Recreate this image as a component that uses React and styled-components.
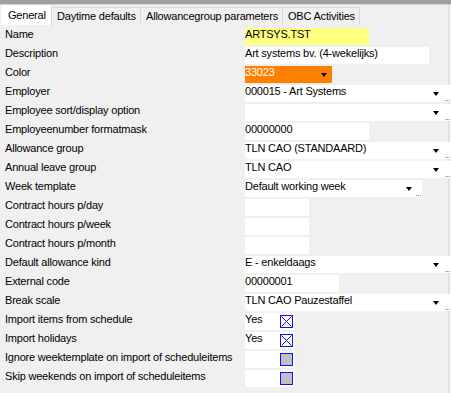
import React from 'react';
import styled, { createGlobalStyle } from 'styled-components';

const GlobalStyle = createGlobalStyle`
  html, body {
    margin: 0;
    padding: 0;
    background: #f0f0f0;
  }
  body {
    font-family: "Liberation Sans", Arial, sans-serif;
    font-size: 11px;
    letter-spacing: -0.2px;
    color: #000;
  }
`;

const tabs = [
  { title: 'General', width: 51 },
  { title: 'Daytime defaults', width: 90 },
  { title: 'Allowancegroup parameters', width: 143 },
  { title: 'OBC Activities', width: 78 }
];

const rows = [
  { label: 'Name', kind: 'text', value: 'ARTSYS.TST', width: 124, bg: '#ffff80' },
  { label: 'Description', kind: 'text', value: 'Art systems bv. (4-wekelijks)', width: 184 },
  { label: 'Color', kind: 'combo', value: '33023', width: 87, bg: '#ff8000', color: '#fff', arrow: 5 },
  { label: 'Employer', kind: 'combo', value: '000015 - Art Systems', width: 206, dots: true, arrow: 12 },
  { label: 'Employee sort/display option', kind: 'combo', value: '', width: 206, dots: true, arrow: 12 },
  { label: 'Employeenumber formatmask', kind: 'text', value: '00000000', width: 124 },
  { label: 'Allowance group', kind: 'combo', value: 'TLN CAO (STANDAARD)', width: 206, dots: true, arrow: 12 },
  { label: 'Annual leave group', kind: 'combo', value: 'TLN CAO', width: 206, dots: true, arrow: 12 },
  { label: 'Week template', kind: 'combo', value: 'Default working week', width: 177, dots: true, arrow: 10 },
  { label: 'Contract hours p/day', kind: 'text', value: '', width: 64 },
  { label: 'Contract hours p/week', kind: 'text', value: '', width: 64 },
  { label: 'Contract hours p/month', kind: 'text', value: '', width: 64 },
  { label: 'Default allowance kind', kind: 'combo', value: 'E - enkeldaags', width: 206, dots: true, arrow: 12 },
  { label: 'External code', kind: 'text', value: '00000001', width: 94 },
  { label: 'Break scale', kind: 'combo', value: 'TLN CAO Pauzestaffel', width: 206, dots: true, arrow: 12 },
  { label: 'Import items from schedule', kind: 'check', value: 'Yes', checked: true },
  { label: 'Import holidays', kind: 'check', value: 'Yes', checked: true },
  { label: 'Ignore weektemplate on import of scheduleitems', kind: 'check', value: '', checked: false },
  { label: 'Skip weekends on import of scheduleitems', kind: 'check', value: '', checked: false }
];

const Combo = ({ value, width, bg, color, dots, arrow }) => (
  <Field $width={width} $bg={bg} $color={color}>
    <FieldText>{value}</FieldText>
    <Arrow $right={arrow} />
    {dots && <Dots>...</Dots>}
  </Field>
);

const Check = ({ value, checked }) => (
  <CheckCell>
    <FieldText>{value}</FieldText>
    <Box $checked={checked}>
      {checked && (
        <svg width="11" height="11" viewBox="0 0 11 11">
          <path d="M0.5 0.5 L10.5 10.5 M10.5 0.5 L0.5 10.5" stroke="#1010ff" strokeWidth="1" fill="none" />
        </svg>
      )}
    </Box>
  </CheckCell>
);

const App = () => (
  <>
    <GlobalStyle />
    <Page>
      <TopBar />
      <TabStrip>
        {tabs.map((t, i) => (
          <Tab key={t.title} $active={i === 0} $width={t.width}>
            {t.title}
          </Tab>
        ))}
      </TabStrip>
      <Form>
        {rows.map(row => (
          <Row key={row.label}>
            <Label>{row.label}</Label>
            {row.kind === 'text' && (
              <Field $width={row.width} $bg={row.bg}>
                <FieldText>{row.value}</FieldText>
              </Field>
            )}
            {row.kind === 'combo' && <Combo {...row} />}
            {row.kind === 'check' && <Check {...row} />}
          </Row>
        ))}
      </Form>
    </Page>
  </>
);

const Page = styled.div`
  width: 451px;
  height: 393px;
  overflow: hidden;
  background: #f0f0f0;
`;

const TopBar = styled.div`
  height: 4px;
  background: #a0a0a0;
  border-bottom: 1px solid #d4d4d4;
`;

const TabStrip = styled.div`
  display: flex;
  align-items: flex-end;
  height: 20px;
  padding-left: 1px;
  border-right: 1px solid #dadada;
  width: 447px;
`;

const Tab = styled.div`
  box-sizing: border-box;
  flex-shrink: 0;
  width: ${p => p.$width}px;
  height: ${p => (p.$active ? 20 : 18)}px;
  padding: ${p => (p.$active ? '3px 0 0 6px' : '2px 0 0 5px')};
  line-height: 13px;
  background: ${p => (p.$active ? '#ffffff' : '#f0f0f0')};
  border: 1px solid ${p => (p.$active ? '#ffffff' : '#d9d9d9')};
  border-bottom: none;
  margin-left: ${p => (p.$active ? 0 : -1)}px;
  white-space: nowrap;
  overflow: hidden;
`;

const Form = styled.div`
  display: flex;
  flex-direction: column;
  gap: 2px;
  padding-top: 3px;
  border-right: 1px solid #dadada;
  width: 448px;
  height: 368px;
`;

const Row = styled.div`
  display: flex;
  height: 17px;
`;

const Label = styled.div`
  flex-shrink: 0;
  width: 240px;
  padding-left: 5px;
  line-height: 13px;
  white-space: nowrap;
  overflow: hidden;
`;

const Field = styled.div`
  position: relative;
  flex-shrink: 0;
  box-sizing: border-box;
  width: ${p => p.$width}px;
  height: 17px;
  background: ${p => p.$bg || '#ffffff'};
  color: ${p => p.$color || '#000'};
`;

const FieldText = styled.span`
  display: block;
  line-height: 13px;
  white-space: nowrap;
  overflow: hidden;
`;

const Arrow = styled.span`
  position: absolute;
  top: 7px;
  right: ${p => p.$right}px;
  width: 0;
  height: 0;
  border-left: 3.5px solid transparent;
  border-right: 3.5px solid transparent;
  border-top: 4px solid #000;
`;

const Dots = styled.span`
  position: absolute;
  right: 1px;
  bottom: 1px;
  font-size: 8px;
  line-height: 5px;
  letter-spacing: -0.4px;
  color: #404040;
`;

const CheckCell = styled.div`
  position: relative;
  flex-shrink: 0;
  width: 50px;
  height: 17px;
  background: #ffffff;
`;

const Box = styled.span`
  position: absolute;
  left: 35px;
  top: 2px;
  box-sizing: border-box;
  width: 13px;
  height: 13px;
  border: 1px solid #1010ff;
  background: ${p => (p.$checked ? '#ffffff' : '#c0c0c0')};
  display: flex;
  align-items: center;
  justify-content: center;
`;

export default App;
